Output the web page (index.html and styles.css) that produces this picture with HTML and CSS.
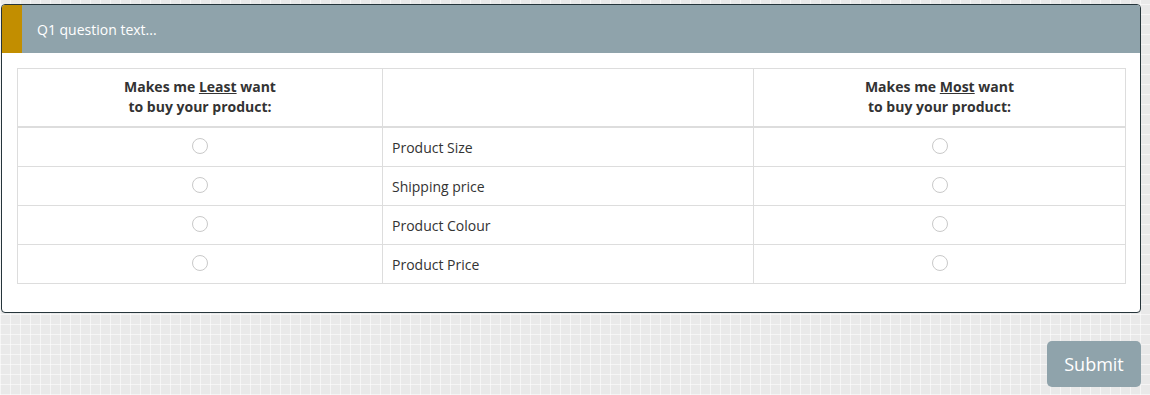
FILE: index.html
```html
<!DOCTYPE html>
<html lang="en">
<head>
  <meta charset="UTF-8" />
  <title>Survey</title>
  <link rel="stylesheet" href="styles.css">
</head>
<body>

  <div class="page">
    <section class="question">
      <header class="question-head">
        <span class="question-mark"></span>
        <span class="question-title">Q1 question text...</span>
      </header>

      <div class="question-body">
        <table class="maxdiff">
          <colgroup>
            <col class="col-least">
            <col class="col-item">
            <col>
          </colgroup>
          <thead>
            <tr>
              <th>Makes me <u>Least</u> want<br>to buy your product:</th>
              <th></th>
              <th>Makes me <u>Most</u> want<br>to buy your product:</th>
            </tr>
          </thead>
          <tbody>
            <tr>
              <td class="pick"><span class="radio"></span></td>
              <td class="item">Product Size</td>
              <td class="pick"><span class="radio"></span></td>
            </tr>
            <tr>
              <td class="pick"><span class="radio"></span></td>
              <td class="item">Shipping price</td>
              <td class="pick"><span class="radio"></span></td>
            </tr>
            <tr>
              <td class="pick"><span class="radio"></span></td>
              <td class="item">Product Colour</td>
              <td class="pick"><span class="radio"></span></td>
            </tr>
            <tr>
              <td class="pick"><span class="radio"></span></td>
              <td class="item">Product Price</td>
              <td class="pick"><span class="radio"></span></td>
            </tr>
          </tbody>
        </table>
      </div>
    </section>

    <div class="actions">
      <button class="submit">Submit</button>
    </div>
  </div>

</body>
</html>
```

FILE: styles.css
```css
html, body {
  height: 100%;
}
body {
  margin: 0;
  font-family: 'Open Sans', sans-serif;
  color: #333;
  background-color: #e9e9e9;
  background-image:
    repeating-linear-gradient(90deg, rgba(255,255,255,0.55) 0 1px, transparent 1px 10px),
    repeating-linear-gradient(0deg, rgba(255,255,255,0.55) 0 1px, transparent 1px 10px);
}
.page {
  padding: 4px 9px 0 1px;
}
.question {
  background: #fff;
  border: 1px solid #26353b;
  border-radius: 4px;
  overflow: hidden;
}
.question-head {
  display: flex;
  align-items: stretch;
  height: 48px;
  background: #8fa3ab;
}
.question-mark {
  width: 20px;
  background: #c28e00;
}
.question-title {
  display: flex;
  align-items: center;
  padding-left: 15px;
  color: #fff;
  font-size: 14px;
}
.question-body {
  padding: 15px 14px 28px 15px;
}
.maxdiff {
  width: 100%;
  border-collapse: collapse;
  table-layout: fixed;
  font-size: 14px;
}
.col-least { width: 365px; }
.col-item { width: 371px; }
.maxdiff th,
.maxdiff td {
  border: 1px solid #ddd;
  padding: 0;
}
.maxdiff th {
  height: 55px;
  padding-bottom: 2px;
  font-weight: 700;
  line-height: 20px;
  text-align: center;
  border-bottom-width: 2px;
  color: #333;
}
.maxdiff tbody tr {
  height: 39px;
}
.maxdiff td.pick {
  text-align: center;
  vertical-align: top;
  padding-top: 10px;
}
.maxdiff td.item {
  padding-left: 9px;
  padding-top: 1px;
  vertical-align: middle;
}
.radio {
  display: block;
  margin: 0 auto;
  width: 16px;
  height: 16px;
  box-sizing: border-box;
  border: 1px solid #c9c9c9;
  border-radius: 50%;
  background: #fff;
}
.actions {
  display: flex;
  justify-content: flex-end;
  margin-top: 28px;
}
.submit {
  width: 94px;
  height: 46px;
  border: none;
  border-radius: 5px;
  background: #8fa3ab;
  color: #fff;
  font-family: 'Open Sans', sans-serif;
  font-size: 18px;
}
```
